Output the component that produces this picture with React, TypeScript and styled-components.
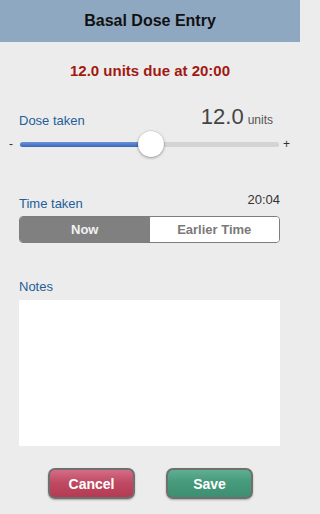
import React, { useState } from 'react';
import styled, { createGlobalStyle } from 'styled-components';

const GlobalStyle = createGlobalStyle`
    html, body {
        margin: 0;
        padding: 0;
        background: #ececec;
        font-family: 'Liberation Sans', Arial, sans-serif;
    }
`;

const Screen = styled.div`
    width: 300px;
    height: 514px;
    display: flex;
    flex-direction: column;
    background: #ececec;
    overflow: hidden;
`;

const Header = styled.div`
    height: 42px;
    flex-shrink: 0;
    display: flex;
    align-items: center;
    justify-content: center;
    background: #8fa8c2;
    color: #111;
    font-size: 16px;
    font-weight: bold;
`;

const DueLine = styled.div`
    margin-top: 20px;
    text-align: center;
    color: #a11a12;
    font-size: 15px;
    font-weight: bold;
`;

const Body = styled.div`
    padding: 0 20px 0 19px;
    display: flex;
    flex-direction: column;
`;

const LabelRow = styled.div<{ $top: number }>`
    margin-top: ${p => p.$top}px;
    display: flex;
    justify-content: space-between;
    align-items: flex-end;
`;

const Label = styled.span`
    color: #255e99;
    font-size: 13px;
`;

const DoseValue = styled.span`
    padding-right: 7px;
    color: #444;
    font-size: 22px;
    line-height: 1;
`;

const Unit = styled.span`
    margin-left: 4px;
    font-size: 12px;
    color: #555;
`;

const TimeValue = styled.span`
    color: #333;
    font-size: 13px;
    position: relative;
    top: -4px;
`;

const SliderRow = styled.div`
    margin: 3px -20px 0 -19px;
    height: 26px;
    display: flex;
    align-items: center;
`;

const Sign = styled.span<{ $side: 'left' | 'right' }>`
    width: ${p => (p.$side === 'left' ? 20 : 21)}px;
    box-sizing: border-box;
    padding: ${p => (p.$side === 'left' ? '0 0 0 9px' : '0 0 0 4px')};
    color: #333;
    font-size: 12px;
`;

const Track = styled.div`
    flex: 1;
    height: 5px;
    border-radius: 3px;
    background: #d4d4d4;
    position: relative;
`;

const Fill = styled.div`
    height: 100%;
    border-radius: 3px;
    background: linear-gradient(#6a93d8, #3b67bd);
`;

const Thumb = styled.div`
    position: absolute;
    top: 50%;
    width: 26px;
    height: 26px;
    margin: -13px 0 0 -13px;
    border-radius: 50%;
    background: #fff;
    box-shadow: 0 1px 3px rgba(0, 0, 0, 0.35), 0 0 0 0.5px rgba(0, 0, 0, 0.1);
`;

const Segmented = styled.div`
    margin-top: 5px;
    height: 27px;
    display: flex;
    border: 1px solid #7d7d7d;
    border-radius: 4px;
    overflow: hidden;
    box-sizing: border-box;
`;

const Segment = styled.div<{ $active: boolean }>`
    flex: 1;
    display: flex;
    align-items: center;
    justify-content: center;
    font-size: 13px;
    font-weight: bold;
    background: ${p => (p.$active ? '#808080' : '#fff')};
    color: ${p => (p.$active ? '#f2f2f2' : '#7a7a7a')};
`;

const NotesBox = styled.div`
    margin-top: 6px;
    height: 146px;
    background: #fff;
`;

const Buttons = styled.div`
    margin-top: 22px;
    padding-left: 2px;
    display: flex;
    justify-content: center;
    gap: 31px;
`;

const ActionButton = styled.div<{ $tone: 'red' | 'green' }>`
    width: 87px;
    height: 31px;
    box-sizing: border-box;
    border-radius: 7px;
    border: 2px solid #6f6f6f;
    display: flex;
    align-items: center;
    justify-content: center;
    color: #fff;
    font-size: 14px;
    font-weight: bold;
    background: ${p =>
        p.$tone === 'red'
            ? 'linear-gradient(#d46d86 0%, #c04a63 45%, #b33a52 100%)'
            : 'linear-gradient(#5fae92 0%, #479a7c 45%, #3d8f72 100%)'};
    box-shadow: 0 1px 2px rgba(0, 0, 0, 0.3);
`;

const App = () => {
    const [now, setNow] = useState(true);
    const dose = 12.0;
    const pct = 50.5;

    return (
        <Screen>
            <GlobalStyle />
            <Header>Basal Dose Entry</Header>
            <DueLine>12.0 units due at 20:00</DueLine>
            <Body>
                <LabelRow $top={27}>
                    <Label>Dose taken</Label>
                    <DoseValue>
                        {dose.toFixed(1)}
                        <Unit>units</Unit>
                    </DoseValue>
                </LabelRow>
                <SliderRow>
                    <Sign $side="left">-</Sign>
                    <Track>
                        <Fill style={{ width: `${pct}%` }} />
                        <Thumb style={{ left: `${pct}%` }} />
                    </Track>
                    <Sign $side="right">+</Sign>
                </SliderRow>
                <LabelRow $top={39}>
                    <Label>Time taken</Label>
                    <TimeValue>20:04</TimeValue>
                </LabelRow>
                <Segmented>
                    <Segment $active={now} onClick={() => setNow(true)}>
                        Now
                    </Segment>
                    <Segment $active={!now} onClick={() => setNow(false)}>
                        Earlier Time
                    </Segment>
                </Segmented>
                <LabelRow $top={36}>
                    <Label>Notes</Label>
                </LabelRow>
                <NotesBox />
                <Buttons>
                    <ActionButton $tone="red">Cancel</ActionButton>
                    <ActionButton $tone="green">Save</ActionButton>
                </Buttons>
            </Body>
        </Screen>
    );
};

export default App;
